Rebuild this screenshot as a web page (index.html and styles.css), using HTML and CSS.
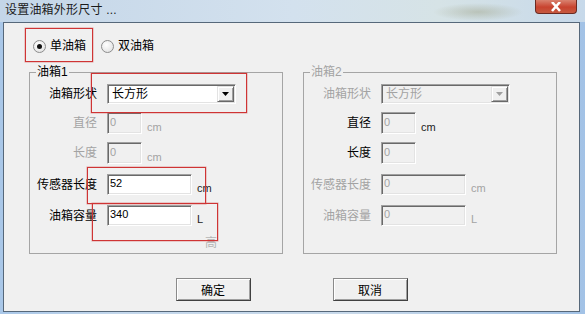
FILE: index.html
```html
<!DOCTYPE html>
<html lang="zh-CN">
<head>
    <meta charset="UTF-8">
    <title>设置油箱外形尺寸</title>
    <link rel="stylesheet" href="styles.css">
</head>
<body>
    <div class="window">
        <div class="titlebar">
            <span class="title">设置油箱外形尺寸 ...</span>
            <span class="close">
                <svg width="14" height="10" viewBox="0 0 14 10"><path d="M3 0 L11 9 M11 0 L3 9" stroke="#fff" stroke-width="2.6"/></svg>
            </span>
        </div>

        <div class="client">
            <div class="tank-choice">
                <span class="radio checked"><span class="dot"></span>单油箱</span>
                <span class="radio"><span class="dot"></span>双油箱</span>
            </div>

            <div class="groups">
                <fieldset class="group">
                    <legend>油箱1</legend>
                    <div class="rows">
                        <div class="row">
                            <span class="lbl">油箱形状</span>
                            <div class="combo">
                                <span class="combo-text">长方形</span>
                                <span class="combo-btn"><svg width="7" height="4" viewBox="0 0 7 4"><path d="M0 0 H7 L3.5 4 Z" fill="#000"/></svg></span>
                            </div>
                        </div>
                        <div class="row">
                            <span class="lbl off">直径</span>
                            <input class="field small" value="0" disabled>
                            <span class="unit off">cm</span>
                        </div>
                        <div class="row">
                            <span class="lbl off">长度</span>
                            <input class="field small" value="0" disabled>
                            <span class="unit off">cm</span>
                        </div>
                        <div class="row wide">
                            <span class="lbl">传感器长度</span>
                            <input class="field big" value="52">
                            <span class="unit">cm</span>
                        </div>
                        <div class="row wide">
                            <span class="lbl">油箱容量</span>
                            <input class="field big" value="340">
                            <span class="unit">L</span>
                        </div>
                    </div>
                    <div class="hint">高</div>
                </fieldset>

                <fieldset class="group">
                    <legend class="off">油箱2</legend>
                    <div class="rows">
                        <div class="row">
                            <span class="lbl off">油箱形状</span>
                            <div class="combo disabled">
                                <span class="combo-text">长方形</span>
                                <span class="combo-btn"><svg width="7" height="4" viewBox="0 0 7 4"><path d="M0 0 H7 L3.5 4 Z" fill="#a0a0a0"/></svg></span>
                            </div>
                        </div>
                        <div class="row">
                            <span class="lbl">直径</span>
                            <input class="field small" value="0" disabled>
                            <span class="unit">cm</span>
                        </div>
                        <div class="row">
                            <span class="lbl">长度</span>
                            <input class="field small" value="0" disabled>
                        </div>
                        <div class="row wide">
                            <span class="lbl off">传感器长度</span>
                            <input class="field big" value="0" disabled>
                            <span class="unit off">cm</span>
                        </div>
                        <div class="row wide">
                            <span class="lbl off">油箱容量</span>
                            <input class="field big" value="0" disabled>
                            <span class="unit off">L</span>
                        </div>
                    </div>
                </fieldset>
            </div>

            <div class="buttons">
                <button class="btn">确定</button>
                <button class="btn">取消</button>
            </div>
        </div>

        <!-- red annotation boxes -->
        <div class="mark mark-choice"></div>
        <div class="mark mark-shape"></div>
        <div class="mark mark-sensor"></div>
        <div class="mark mark-volume"></div>
    </div>
</body>
</html>
```

FILE: styles.css
```css
:root {
    --face: #f0f0f0;
    --grey-text: #a3a3a3;
    --mark: #cf3434;
}

body {
    margin: 0;
    font-family: "Liberation Sans", "Noto Sans CJK SC", sans-serif;
    font-size: 12px;
    line-height: 14px;
    color: #000;
}

.window {
    position: relative;
    width: 585px;
    height: 314px;
    display: flex;
    flex-direction: column;
    overflow: hidden;
    background: linear-gradient(to right, #a9c7e8, #c3d7ec 20%, #c8d9ea 60%, #a2c2e6);
}

.titlebar {
    height: 22px;
    flex: none;
    display: flex;
    align-items: flex-start;
    padding-left: 5px;
    background:
        radial-gradient(ellipse 45px 9px at 478px 12px, rgba(140, 140, 100, 0.35), transparent),
        linear-gradient(to right, #c4d6e8, #d3e1ee 50%, #d6e3e6 75%, #c7d9ea);
}

.title {
    margin-top: 3px;
    color: #1a1a1a;
    letter-spacing: 0.2px;
}

.close {
    margin-left: auto;
    margin-right: 8px;
    width: 42px;
    height: 14px;
    display: flex;
    align-items: center;
    justify-content: center;
    box-sizing: border-box;
    border: 1px solid #6b2a22;
    border-top: none;
    border-radius: 0 0 4px 4px;
    background: linear-gradient(#d9826f, #c8432f 55%, #c65a40);
}

.client {
    flex: 1;
    margin: 0 5px 2px 3px;
    border: 1px solid #56687a;
    background: var(--face);
}

.tank-choice {
    display: flex;
    gap: 15px;
    margin-top: 16px;
    padding-left: 29px;
    height: 14px;
}

.radio {
    display: flex;
    align-items: center;
    gap: 4px;
}

.radio .dot {
    width: 13px;
    height: 13px;
    box-sizing: border-box;
    border-radius: 50%;
    border: 1px solid #8c8c8c;
    background: radial-gradient(circle at 40% 35%, #ffffff, #dcdcdc);
    display: flex;
    align-items: center;
    justify-content: center;
}

.radio.checked .dot::after {
    content: "";
    width: 5px;
    height: 5px;
    border-radius: 50%;
    background: #111;
}

.groups {
    display: flex;
    gap: 20px;
    margin-top: 12px;
    padding-left: 25px;
}

.group {
    margin: 0;
    padding: 5px 0 0 0;
    width: 254px;
    height: 189px;
    box-sizing: border-box;
    min-width: 0;
    border: 1px solid #a5a5a5;
}

.group legend {
    margin-left: 6px;
    padding: 0 1px;
    line-height: 14px;
}

.rows {
    display: flex;
    flex-direction: column;
    gap: 8px;
}

.row {
    display: flex;
    align-items: center;
}

.row.wide {
    margin-top: 2px;
}

.lbl {
    width: 67px;
    margin-right: 10px;
    text-align: right;
    white-space: nowrap;
}

.off {
    color: var(--grey-text);
}

.field {
    box-sizing: border-box;
    height: 22px;
    margin: 0;
    padding: 0 2px 3px;
    font-family: "Liberation Sans", sans-serif;
    font-size: 11px;
    color: #000;
    background: #fff;
    border: 1px solid;
    border-color: #a0a0a0 #fff #fff #a0a0a0;
    box-shadow: inset 1px 1px #696969, inset -1px -1px #e3e3e3;
    outline: none;
}

.field:disabled {
    color: var(--grey-text);
    background: var(--face);
}

.field.small {
    width: 35px;
}

.field.big {
    width: 85px;
    height: 21px;
}

.unit {
    align-self: flex-end;
    margin-left: 5px;
    font-size: 11px;
    color: #222;
}

.unit.off {
    color: var(--grey-text);
}

.combo {
    box-sizing: border-box;
    width: 129px;
    height: 20px;
    display: flex;
    align-items: stretch;
    background: #fff;
    border: 1px solid;
    border-color: #a0a0a0 #fff #fff #a0a0a0;
    box-shadow: inset 1px 1px #696969, inset -1px -1px #e3e3e3;
    padding: 1px;
}

.combo-text {
    flex: 1;
    padding-left: 3px;
    line-height: 16px;
}

.combo-btn {
    width: 17px;
    display: flex;
    align-items: center;
    justify-content: center;
    box-sizing: border-box;
    background: var(--face);
    border: 1px solid;
    border-color: #e3e3e3 #696969 #696969 #e3e3e3;
    box-shadow: inset 1px 1px #fff, inset -1px -1px #a0a0a0;
}

.combo.disabled {
    background: var(--face);
}

.combo.disabled .combo-text {
    color: var(--grey-text);
}

.hint {
    margin-top: 10px;
    margin-left: 175px;
    color: #b4b4b4;
}

.buttons {
    display: flex;
    justify-content: center;
    gap: 82px;
    margin-top: 24px;
}

.btn {
    width: 75px;
    height: 23px;
    margin: 0;
    padding: 0;
    font-family: "Noto Sans CJK SC", sans-serif;
    font-size: 12px;
    color: #000;
    background: var(--face);
    border: 1px solid;
    border-color: #8a8a8a #404040 #404040 #8a8a8a;
    box-shadow: inset 1px 1px #fff, inset -1px -1px #a0a0a0;
}

.mark {
    position: absolute;
    box-sizing: border-box;
    border: 1px solid var(--mark);
    box-shadow: 0 0 0 0.5px rgba(210, 80, 80, 0.5);
}

.mark-choice {
    left: 25px;
    top: 28px;
    width: 68px;
    height: 34px;
}

.mark-shape {
    left: 91px;
    top: 73px;
    width: 156px;
    height: 40px;
}

.mark-sensor {
    left: 87px;
    top: 167px;
    width: 119px;
    height: 37px;
}

.mark-volume {
    left: 92px;
    top: 203px;
    width: 126px;
    height: 38px;
}
```
